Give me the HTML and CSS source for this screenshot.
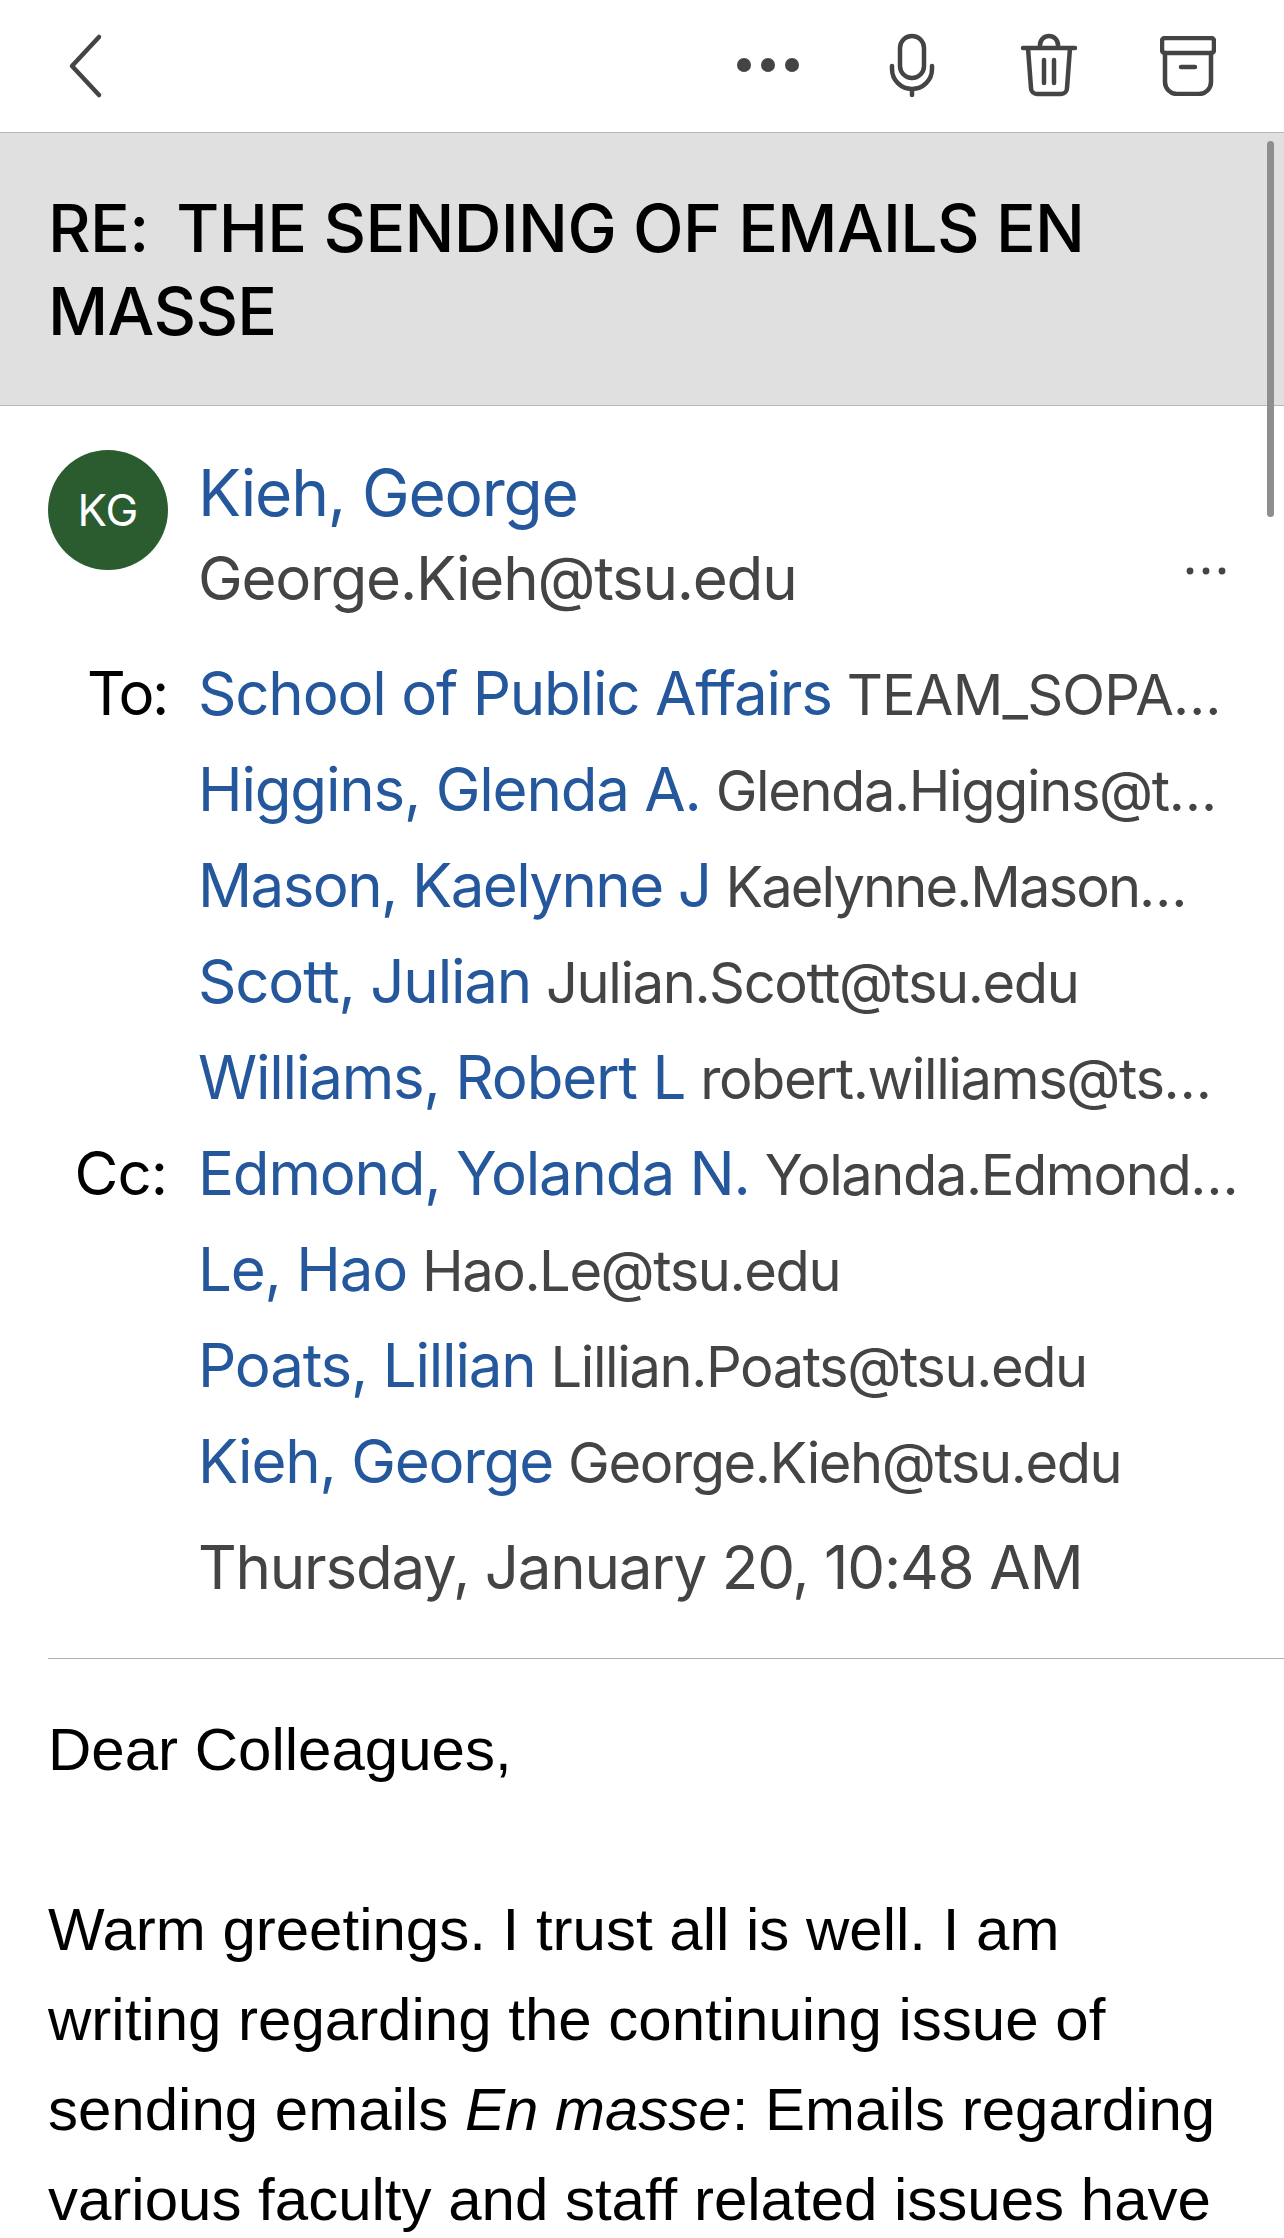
FILE: index.html
```html
<!DOCTYPE html>
<html lang="en">
<head>
<meta charset="utf-8">
<title>RE: THE SENDING OF EMAILS EN MASSE</title>
<link rel="stylesheet" href="styles.css">
</head>
<body>
<div class="screen">
  <header class="toolbar">
    <svg class="ic back" viewBox="0 0 36 66"><path d="M31 4 4 33l27 29"/></svg>
    <div class="actions">
      <svg class="ic dots" viewBox="0 0 64 16"><circle cx="8" cy="8" r="7"/><circle cx="32" cy="8" r="7"/><circle cx="56" cy="8" r="7"/></svg>
      <svg class="ic mic" viewBox="0 0 46 64"><rect x="11" y="3" width="24" height="42" rx="12"/><path d="M3 33v3a20 20 0 0 0 40 0v-3M23 56v6"/></svg>
      <svg class="ic trash" viewBox="0 0 58 64"><path d="M3 15h52M20 15v-3a9 9 0 0 1 18 0v3M8 15l3 40a6 6 0 0 0 6 6h24a6 6 0 0 0 6-6l3-40M24 27v23M34 27v23"/></svg>
      <svg class="ic archive" viewBox="0 0 56 60"><rect x="2" y="2" width="52" height="15" rx="3"/><path d="M5 17v29a12 12 0 0 0 12 12h22a12 12 0 0 0 12-12V17M21 31h14"/></svg>
    </div>
  </header>

  <main class="content">
    <div class="scrollbar"></div>
    <h1 class="subject">RE:&nbsp;&thinsp;THE SENDING OF EMAILS EN MASSE</h1>

    <section class="sender">
      <div class="avatar">KG</div>
      <div class="sender-meta">
        <div class="sender-name">Kieh, George</div>
        <div class="sender-mail">George.Kieh@tsu.edu</div>
      </div>
      <svg class="ic more" viewBox="0 0 40 8"><circle cx="4" cy="4" r="3.4"/><circle cx="20" cy="4" r="3.4"/><circle cx="36" cy="4" r="3.4"/></svg>
    </section>

    <section class="recipients">
      <div class="label to">To:</div><div class="row"><span class="name">School of Public Affairs</span><span class="mail caps">TEAM_SOPA…</span></div>
      <div class="label"></div><div class="row"><span class="name">Higgins, Glenda A.</span><span class="mail">Glenda.Higgins@t…</span></div>
      <div class="label"></div><div class="row tight"><span class="name">Mason, Kaelynne J</span><span class="mail">Kaelynne.Mason…</span></div>
      <div class="label"></div><div class="row"><span class="name">Scott, Julian</span><span class="mail">Julian.Scott@tsu.edu</span></div>
      <div class="label"></div><div class="row"><span class="name">Williams, Robert L</span><span class="mail">robert.williams@ts…</span></div>
      <div class="label">Cc:</div><div class="row"><span class="name">Edmond, Yolanda N.</span><span class="mail">Yolanda.Edmond…</span></div>
      <div class="label"></div><div class="row"><span class="name">Le, Hao</span><span class="mail">Hao.Le@tsu.edu</span></div>
      <div class="label"></div><div class="row"><span class="name">Poats, Lillian</span><span class="mail">Lillian.Poats@tsu.edu</span></div>
      <div class="label"></div><div class="row"><span class="name">Kieh, George</span><span class="mail">George.Kieh@tsu.edu</span></div>
    </section>

    <div class="date">Thursday, January 20, 10:48 AM</div>

    <article class="message">
      <p>Dear Colleagues,</p>
      <p>Warm greetings. I trust all is well. I am<br>writing regarding the continuing issue of<br>sending emails <em>En masse</em>: Emails regarding<br>various faculty and staff related issues have</p>
    </article>
  </main>
</div>
</body>
</html>
```
FILE: styles.css
```css
* { box-sizing: border-box; }
html, body { margin: 0; padding: 0; background: #fff; }
.screen { width: 1284px; height: 2238px; overflow: hidden; font-family: Inter, "Liberation Sans", sans-serif; color: #000; }

.toolbar { height: 133px; display: flex; align-items: flex-start; justify-content: space-between; padding: 33px 68px 0 68px; border-bottom: 1px solid #b8b8b8; }
.ic { display: block; fill: none; stroke: #444; stroke-width: 4.5; stroke-linecap: round; stroke-linejoin: round; flex: none; }
.back { width: 36px; height: 66px; }
.actions { display: flex; align-items: flex-start; }
.dots { width: 64px; height: 16px; margin: 24px 0 0 0; fill: #444; stroke: none; }
.mic { width: 46px; height: 64px; margin: 0 0 0 89px; }
.trash { width: 58px; height: 64px; margin: 0 0 0 85px; }
.archive { width: 56px; height: 60px; margin: 3px 0 0 82px; }

.content { position: relative; }
.scrollbar { position: absolute; top: 8px; right: 10px; width: 7px; height: 376px; border-radius: 4px; background: #8e8e8e; }

.subject { margin: 0; height: 273px; padding: 54px 48px 0; background: #e0e0e0; border-bottom: 1px solid #b8b8b8; font-size: 66px; line-height: 83px; font-weight: 500; letter-spacing: -0.65px; }

.sender { display: flex; padding: 44px 0 0 48px; position: relative; }
.avatar { width: 120px; height: 120px; border-radius: 50%; background: #2a5c30; color: #fff; display: flex; align-items: center; justify-content: center; font-size: 44px; flex: none; }
.sender-meta { margin-left: 30px; }
.sender-name { color: #24579b; font-size: 64px; line-height: 86px; letter-spacing: -1.2px; }
.sender-mail { color: #444; font-size: 60px; line-height: 85px; letter-spacing: -1.2px; }
.more { position: absolute; right: 58px; top: 161px; width: 40px; height: 8px; fill: #444; stroke: none; }

.recipients { display: grid; grid-template-columns: 198px 1fr; grid-auto-rows: 96px; margin-top: 24px; }
.label { font-size: 60px; line-height: 96px; text-align: right; padding-right: 31px; letter-spacing: -1px; }
.to { letter-spacing: -2.4px; }
.row { display: flex; align-items: baseline; gap: 15px; white-space: nowrap; line-height: 96px; }
.name { color: #24579b; font-size: 60px; letter-spacing: -1.2px; }
.mail { color: #444; font-size: 56px; letter-spacing: -1.4px; }
.caps { letter-spacing: -0.8px; }
.tight .name { letter-spacing: -1.6px; }
.tight .mail { letter-spacing: -1.9px; }

.date { margin: 10px 0 0 198px; color: #444; font-size: 60px; line-height: 96px; letter-spacing: -1.2px; }

.message { margin: 43px 0 0 48px; border-top: 1px solid #b0b0b0; padding-top: 46px; font-family: "Liberation Sans", sans-serif; font-size: 60px; line-height: 90px; }
.message p { margin: 0 0 90px; }
```
